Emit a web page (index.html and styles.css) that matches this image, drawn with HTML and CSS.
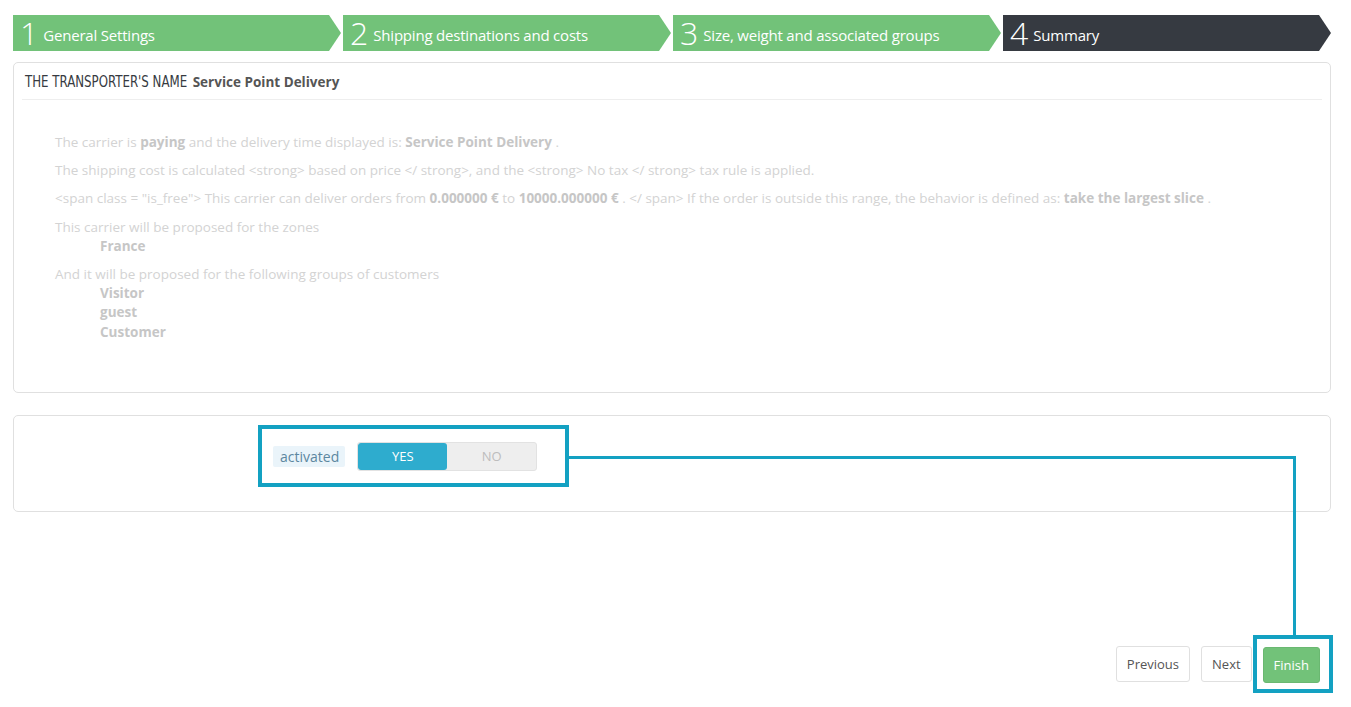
FILE: index.html
```html
<!DOCTYPE html>
<html lang="en">
<head>
<meta charset="utf-8">
<title>Carrier wizard - Summary</title>
<link rel="stylesheet" href="styles.css">
</head>
<body>
<div class="page">
  <nav class="steps">
    <div class="step done"><span class="num">1</span><span class="label">General Settings</span></div>
    <div class="step done"><span class="num">2</span><span class="label">Shipping destinations and costs</span></div>
    <div class="step done"><span class="num">3</span><span class="label">Size, weight and associated groups</span></div>
    <div class="step current"><span class="num">4</span><span class="label">Summary</span></div>
  </nav>

  <section class="panel summary">
    <header class="panel-heading">
      <span class="heading-title">THE TRANSPORTER'S NAME</span>
      <strong class="heading-name">Service Point Delivery</strong>
    </header>
    <div class="summary-body">
      <p>The carrier is <strong>paying</strong> and the delivery time displayed is: <strong>Service Point Delivery</strong> .</p>
      <p>The shipping cost is calculated &lt;strong&gt; based on price &lt;/ strong&gt;, and the &lt;strong&gt; No tax &lt;/ strong&gt; tax rule is applied.</p>
      <p>&lt;span class = "is_free"&gt; This carrier can deliver orders from <strong>0.000000 €</strong> to <strong>10000.000000 €</strong> . &lt;/ span&gt; If the order is outside this range, the behavior is defined as: <strong>take the largest slice</strong> .</p>
      <div class="block">
        <p class="intro">This carrier will be proposed for the zones</p>
        <ul class="items"><li>France</li></ul>
      </div>
      <div class="block">
        <p class="intro">And it will be proposed for the following groups of customers</p>
        <ul class="items"><li>Visitor</li><li>guest</li><li>Customer</li></ul>
      </div>
    </div>
  </section>

  <section class="panel activation">
    <div class="highlight form-row">
      <span class="field-label">activated</span>
      <div class="switch">
        <span class="opt on">YES</span>
        <span class="opt off">NO</span>
      </div>
    </div>
  </section>

  <div class="actions">
    <button class="btn">Previous</button>
    <button class="btn">Next</button>
    <div class="highlight finish-wrap">
      <button class="btn btn-finish">Finish</button>
    </div>
  </div>

  <div class="connector"></div>
</div>
</body>
</html>
```

FILE: styles.css
```css
* { box-sizing: border-box; }

html, body {
  margin: 0;
  padding: 0;
  background: #fff;
}

body {
  font-family: "Open Sans", "Liberation Sans", sans-serif;
  font-size: 13px;
  color: #555;
}

.page {
  position: relative;
  width: 1351px;
  height: 707px;
  padding: 15px 20px 0 13px;
}

/* ---------- wizard steps ---------- */
.steps {
  display: flex;
  gap: 2px;
  height: 36px;
}

.step {
  flex: 1;
  display: flex;
  align-items: center;
  padding-left: 7px;
  color: #fff;
  clip-path: polygon(0 0, calc(100% - 12px) 0, 100% 50%, calc(100% - 12px) 100%, 0 100%);
}

.step.done { background: #72c279; }
.step.current { background: #363a41; }

.step .num {
  font-size: 32px;
  font-weight: 300;
  line-height: 36px;
  margin-right: 5px;
}

.step .label {
  font-size: 15px;
  letter-spacing: -0.2px;
  line-height: 36px;
  padding-top: 3px;
}

/* ---------- panels ---------- */
.panel {
  border: 1px solid #e0e0e0;
  border-radius: 5px;
  background: #fff;
}

.summary {
  margin-top: 11px;
  padding: 0 8px;
  height: 331px;
}

.panel-heading {
  display: flex;
  align-items: center;
  gap: 8px;
  height: 37px;
  padding: 1px 3px 0;
  border-bottom: 1px solid #eee;
}

.heading-title {
  display: inline-block;
  font-family: "Liberation Sans Narrow", "DejaVu Sans Condensed", "Liberation Sans", sans-serif;
  font-size: 16px;
  color: #363a41;
  transform: scaleX(0.82);
  transform-origin: left center;
  margin-right: -38px;
}

.heading-name {
  font-size: 13.5px;
  font-weight: 700;
  color: #555;
}

.summary-body {
  padding: 33px 0 0 33px;
  font-size: 13.5px;
  color: #d3d3d3;
  line-height: 19.2px;
}

.summary-body p {
  margin: 0 0 9px;
}

.summary-body strong {
  color: #c6c6c6;
  font-weight: 700;
}

.block .intro { margin: 0; }

.items {
  list-style: none;
  margin: 0 0 9px;
  padding: 0 0 0 45px;
  color: #c6c6c6;
  font-weight: 700;
}

/* ---------- activation ---------- */
.activation {
  margin-top: 22px;
  height: 97px;
  padding: 9px 0 0 244px;
}

.highlight {
  border: 4px solid #13a1c2;
}

.form-row {
  display: flex;
  align-items: center;
  width: 311px;
  height: 62px;
  padding: 0 0 0 11px;
  gap: 12px;
}

.field-label {
  display: inline-block;
  height: 21px;
  line-height: 21px;
  padding: 0 6px 0 7px;
  background: #eaf4fa;
  border-radius: 2px;
  font-size: 14px;
  color: #5c87a0;
}

.switch {
  display: flex;
  width: 180px;
  height: 29px;
  border-radius: 3px;
  background: #eee;
  border: 1px solid #e2e2e2;
  overflow: hidden;
}

.switch .opt {
  flex: 1;
  display: flex;
  align-items: center;
  justify-content: center;
  font-size: 13px;
}

.switch .on {
  background: #2eacce;
  color: #fff;
  border-radius: 3px;
}

.switch .off {
  color: #bdbdbd;
}

/* ---------- actions ---------- */
.actions {
  display: flex;
  justify-content: flex-end;
  align-items: center;
  margin-top: 123px;
  margin-right: -2px;
}

.btn {
  height: 36px;
  padding: 0 10px;
  border: 1px solid #e0e0e0;
  border-radius: 3px;
  background: #fff;
  font-family: "Open Sans", "Liberation Sans", sans-serif;
  font-size: 13px;
  color: #555;
}

.btn + .btn { margin-left: 11px; }

.finish-wrap {
  margin-left: 1px;
  padding: 8px 9px 6px 6px;
}

.btn-finish {
  background: #72c279;
  border-color: #6ab871;
  color: #fff;
}

/* annotation connector line */
.connector {
  position: absolute;
  left: 569px;
  top: 456px;
  width: 727px;
  height: 179px;
  border-top: 3px solid #13a1c2;
  border-right: 3px solid #13a1c2;
  pointer-events: none;
}
```
